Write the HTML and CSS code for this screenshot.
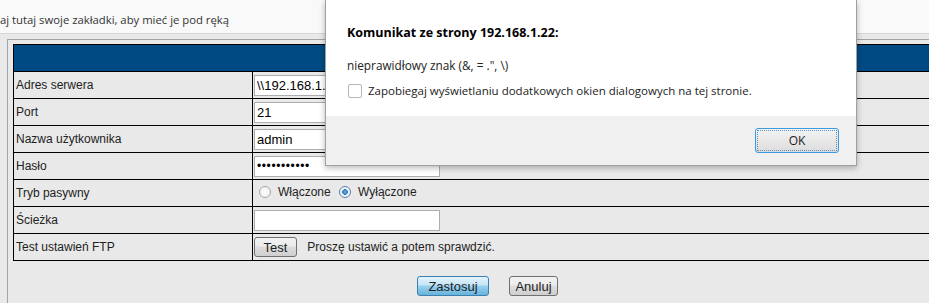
FILE: index.html
```html
<!DOCTYPE html>
<html lang="pl">
<head>
    <meta charset="UTF-8">
    <title>FTP</title>
    <link rel="stylesheet" href="styles.css">
</head>
<body>

    <div class="bookmarks">aj tutaj swoje zakładki, aby mieć je pod ręką</div>

    <div class="frame">
        <table class="settings">
            <tr>
                <td class="head" colspan="2"></td>
            </tr>
            <tr>
                <td class="label">Adres serwera</td>
                <td class="value"><input type="text" class="field" value="\\192.168.1.22"></td>
            </tr>
            <tr>
                <td class="label">Port</td>
                <td class="value"><input type="text" class="field" value="21"></td>
            </tr>
            <tr>
                <td class="label">Nazwa użytkownika</td>
                <td class="value"><input type="text" class="field" value="admin"></td>
            </tr>
            <tr>
                <td class="label">Hasło</td>
                <td class="value"><input type="password" class="field" value="12345678901"></td>
            </tr>
            <tr>
                <td class="label">Tryb pasywny</td>
                <td class="value">
                    <label class="radio"><input type="radio" name="pasv"> Włączone</label>
                    <label class="radio"><input type="radio" name="pasv" checked> Wyłączone</label>
                </td>
            </tr>
            <tr>
                <td class="label">Ścieżka</td>
                <td class="value"><input type="text" class="field"></td>
            </tr>
            <tr>
                <td class="label">Test ustawień FTP</td>
                <td class="value">
                    <button class="btn btn-test">Test</button>
                    <span class="hint">Proszę ustawić a potem sprawdzić.</span>
                </td>
            </tr>
        </table>

        <div class="actions">
            <button class="btn btn-apply">Zastosuj</button>
            <button class="btn btn-cancel">Anuluj</button>
        </div>
    </div>

    <div class="dialog">
        <div class="dialog-body">
            <div class="dialog-title">Komunikat ze strony 192.168.1.22:</div>
            <div class="dialog-msg">nieprawidłowy znak (&amp;, = .", \)</div>
            <label class="dialog-check"><span class="box"></span>Zapobiegaj wyświetlaniu dodatkowych okien dialogowych na tej stronie.</label>
        </div>
        <div class="dialog-foot">
            <button class="ok-btn">OK</button>
        </div>
    </div>

</body>
</html>
```

FILE: styles.css
```css
html, body {
    margin: 0;
    padding: 0;
    overflow: hidden;
    background-color: #e9e9e9;
}
.bookmarks {
    height: 26px;
    padding-top: 7px;
    line-height: 26px;
    background-color: #f9f9f9;
    border-bottom: 1px solid #d6d6d6;
    font-family: 'Open Sans', sans-serif;
    font-size: 11.3px;
    color: #333;
    white-space: nowrap;
}
.frame {
    margin: 5px 0 0 7px;
    padding: 4px 0 60px 5px;
    border-left: 1px solid #a3a3a3;
    border-top: 1px solid #a3a3a3;
}
.settings {
    width: 949px;
    border-collapse: collapse;
    font-family: 'Liberation Sans', Arial, sans-serif;
    font-size: 12px;
    color: #222;
}
.settings td {
    border: 1px solid #000;
    height: 26px;
    padding: 0 2px;
}
.settings .head {
    background-color: #004a83;
}
.settings .label {
    width: 234px;
}
.settings .value {
    padding-left: 1px;
}
.field {
    display: block;
    box-sizing: border-box;
    width: 186px;
    height: 21px;
    margin: 0;
    padding: 0 2px;
    border: 1px solid #abadb3;
    background: #fff;
    font-family: 'Liberation Sans', Arial, sans-serif;
    font-size: 13px;
    color: #000;
    outline: none;
}
input[type="password"].field {
    font-size: 12px;
    letter-spacing: 0.6px;
}
.radio {
    display: inline-flex;
    align-items: center;
    margin-left: 4px;
}
.radio input {
    appearance: none;
    -webkit-appearance: none;
    width: 12px;
    height: 12px;
    margin: 0 7px 0 1px;
    border-radius: 50%;
    border: 1px solid #a8a8a8;
    background: radial-gradient(circle, #fff 0, #ececec 100%);
    box-sizing: border-box;
}
.radio input:checked {
    border-color: #5a7fa8;
    background: radial-gradient(circle, #6fc2f5 0, #1f6fb3 2.5px, #e6eef5 3px, #fff 100%);
}
.btn {
    box-sizing: border-box;
    height: 20px;
    padding: 0;
    border: 1px solid #707070;
    border-radius: 3px;
    background: linear-gradient(#f2f2f2, #ebebeb 45%, #dddddd 50%, #cfcfcf);
    font-family: 'Liberation Sans', Arial, sans-serif;
    font-size: 13px;
    color: #222;
    cursor: pointer;
}
.btn-test {
    width: 43px;
    vertical-align: middle;
}
.hint {
    margin-left: 7px;
    vertical-align: middle;
}
.actions {
    width: 949px;
    display: flex;
    justify-content: center;
    gap: 20px;
    margin-top: 15px;
}
.btn-apply {
    width: 72px;
    border-color: #3c7fb1;
    background: linear-gradient(#e5f4fc, #c4e5f6 45%, #98d1ef 50%, #68b3db);
}
.btn-cancel {
    width: 49px;
}
.dialog {
    position: absolute;
    left: 325px;
    top: 0;
    width: 530px;
    background-color: #fff;
    border: 1px solid #a0a0a0;
    border-top: none;
    box-shadow: 0 2px 6px rgba(0, 0, 0, 0.28);
    font-family: 'Open Sans', sans-serif;
    font-size: 12px;
    color: #222;
}
.dialog-body {
    box-sizing: border-box;
    height: 116px;
    padding: 25px 0 0 21px;
}
.dialog-title {
    line-height: 16px;
    font-size: 12.5px;
    font-weight: bold;
    color: #000;
}
.dialog-msg {
    margin-top: 16px;
    line-height: 16px;
    font-size: 11.8px;
}
.dialog-check {
    display: flex;
    align-items: center;
    margin-top: 10px;
    line-height: 16px;
    font-size: 11.5px;
}
.dialog-check .box {
    width: 12px;
    height: 12px;
    margin: 0 6px 0 1px;
    border: 1px solid #b5b5b5;
    border-radius: 2px;
    background: #fff;
}
.dialog-foot {
    height: 49px;
    background-color: #f0f0f0;
    display: flex;
    justify-content: flex-end;
    align-items: flex-start;
    padding-right: 17px;
}
.ok-btn {
    width: 84px;
    height: 25px;
    margin-top: 12px;
    border: 1px solid #3c9be0;
    border-radius: 3px;
    background: linear-gradient(#f4f4f4, #e8e8e8 50%, #dcdcdc);
    outline: 1px dotted #5e8fbf;
    outline-offset: -3px;
    font-family: 'Open Sans', sans-serif;
    font-size: 12px;
    color: #222;
}
```
